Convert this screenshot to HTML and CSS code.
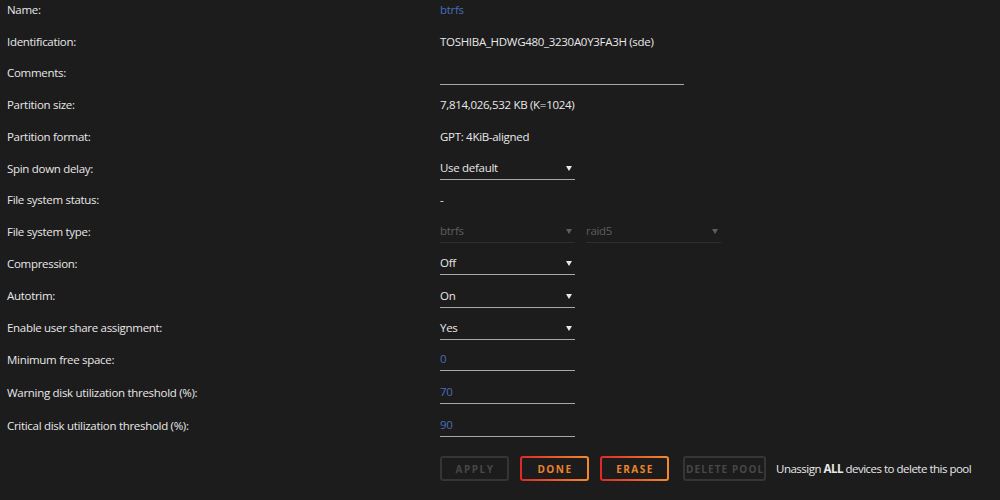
FILE: index.html
```html
<!DOCTYPE html>
<html lang="en">
<head>
  <meta charset="UTF-8" />
  <title>Pool Settings</title>
  <link rel="stylesheet" href="styles.css">
</head>
<body>
  <div class="settings">
    <div class="row"><span class="label">Name:</span><span class="value link">btrfs</span></div>
    <div class="row"><span class="label">Identification:</span><span class="value">TOSHIBA_HDWG480_3230A0Y3FA3H (sde)</span></div>
    <div class="row short"><span class="label">Comments:</span><span class="field wide"></span></div>
    <div class="row"><span class="label">Partition size:</span><span class="value">7,814,026,532 KB (K=1024)</span></div>
    <div class="row"><span class="label">Partition format:</span><span class="value">GPT: 4KiB-aligned</span></div>
    <div class="row"><span class="label">Spin down delay:</span><span class="field select">Use default</span></div>
    <div class="row short"><span class="label">File system status:</span><span class="value">-</span></div>
    <div class="row">
      <span class="label">File system type:</span>
      <div class="pair">
        <span class="field select disabled">btrfs</span>
        <span class="field select disabled">raid5</span>
      </div>
    </div>
    <div class="row"><span class="label">Compression:</span><span class="field select">Off</span></div>
    <div class="row tall"><span class="label">Autotrim:</span><span class="field select">On</span></div>
    <div class="row short"><span class="label">Enable user share assignment:</span><span class="field select">Yes</span></div>
    <div class="row"><span class="label">Minimum free space:</span><span class="field number">0</span></div>
    <div class="row taller"><span class="label">Warning disk utilization threshold (%):</span><span class="field number">70</span></div>
    <div class="row"><span class="label">Critical disk utilization threshold (%):</span><span class="field number">90</span></div>

    <div class="actions">
      <button class="btn" disabled>Apply</button>
      <button class="btn btn-hot">Done</button>
      <button class="btn btn-hot">Erase</button>
      <button class="btn btn-wide" disabled>Delete Pool</button>
      <span class="note">Unassign <b>ALL</b> devices to delete this pool</span>
    </div>
  </div>
</body>
</html>
```

FILE: styles.css
```css
* {
  box-sizing: border-box;
}

body {
  margin: 0;
  background: #1c1c1c;
  color: #e8e8e8;
  font-family: 'Open Sans', 'Noto Sans', sans-serif;
  font-size: 11.5px;
  letter-spacing: -0.3px;
  height: 500px;
  overflow: hidden;
}

.settings {
  margin-top: -7px;
  padding-left: 7px;
}

.row {
  display: flex;
  align-items: center;
  height: 32px;
}

.row.short {
  height: 31px;
}

.row.tall {
  height: 33px;
}

.row.taller {
  height: 34px;
}

.label {
  width: 433px;
  flex-shrink: 0;
}

.link {
  color: #486dba;
}

.field {
  width: 135px;
  height: 24px;
  display: flex;
  align-items: center;
  border-bottom: 1px solid #a8a8a8;
  position: relative;
}

.field.wide {
  width: 244px;
}

.number {
  color: #486dba;
}

.select::after {
  content: "";
  position: absolute;
  right: 3px;
  top: 10px;
  border-left: 3px solid transparent;
  border-right: 3px solid transparent;
  border-top: 5px solid #e8e8e8;
}

.pair {
  display: flex;
  gap: 11px;
}

.select.disabled {
  color: #5e5e5e;
  border-bottom-color: #2e2e2e;
}

.select.disabled::after {
  border-top-color: #5e5e5e;
}

.actions {
  display: flex;
  align-items: center;
  margin-top: 15px;
  padding-left: 433px;
  gap: 11px;
}

.btn {
  width: 69px;
  height: 25px;
  background: transparent;
  border: 2px solid #353535;
  border-radius: 3px;
  color: #474747;
  font-family: inherit;
  font-size: 10px;
  font-weight: 700;
  letter-spacing: 1.5px;
  text-transform: uppercase;
  white-space: nowrap;
  padding: 0 0 0 1px;
}

.btn-hot {
  border: 2px solid transparent;
  background: linear-gradient(#1c1c1c, #1c1c1c) padding-box,
              linear-gradient(90deg, #dd2a26, #f7882e) border-box;
  color: #ec832b;
}

.btn-wide {
  width: 83px;
  margin-left: 3px;
  letter-spacing: 1.1px;
}

.note {
  margin-left: -1px;
  color: #e8e8e8;
  letter-spacing: -0.5px;
}

.note b {
  font-weight: 700;
}
```
